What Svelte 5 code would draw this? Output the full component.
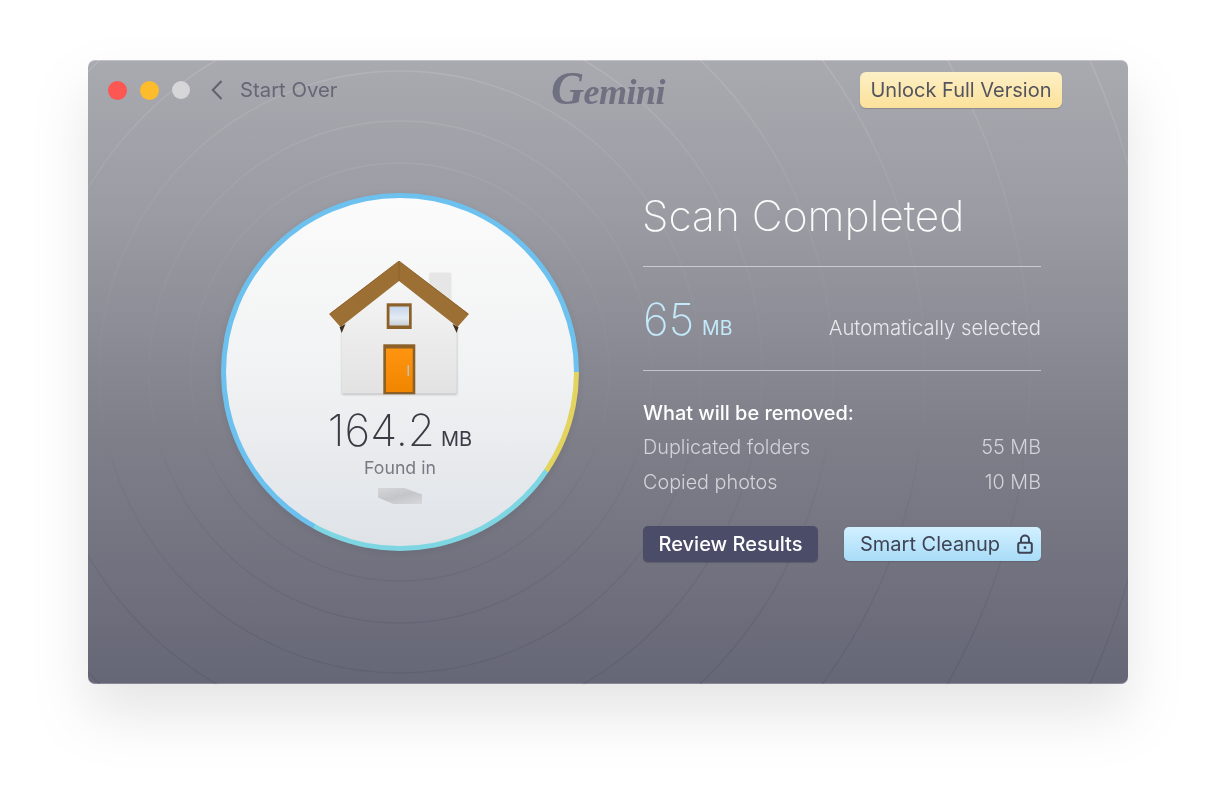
<script>
  const radii = [209, 251, 301, 362, 433, 525, 630, 757];
</script>

<div class="page">
  <div class="window">
    <svg class="rings" width="1040" height="624" viewBox="0 0 1040 624" aria-hidden="true">
      <defs>
        <linearGradient id="ringStroke" gradientUnits="userSpaceOnUse" x1="0" y1="0" x2="0" y2="624">
          <stop offset="0" stop-color="#fff" stop-opacity="0.12" />
          <stop offset="0.25" stop-color="#fff" stop-opacity="0.04" />
          <stop offset="0.5" stop-color="#fff" stop-opacity="0.012" />
          <stop offset="0.65" stop-color="#4a4b5c" stop-opacity="0.07" />
          <stop offset="1" stop-color="#4a4b5c" stop-opacity="0.26" />
        </linearGradient>
      </defs>
      {#each radii as r}
        <circle cx="312" cy="312" {r} fill="none" stroke="url(#ringStroke)" stroke-width="1.5" />
      {/each}
    </svg>

    <header class="titlebar">
      <div class="left">
        <span class="light red"></span>
        <span class="light yellow"></span>
        <span class="light grey"></span>
        <svg class="chevron" width="12" height="20" viewBox="0 0 12 20" aria-hidden="true">
          <path d="M10.5 1 L1.8 10 L10.5 19" fill="none" stroke="#62636f" stroke-width="2.1" />
        </svg>
        <span class="start">Start Over</span>
      </div>
      <div class="logo"><span class="cap">G</span>emini</div>
      <div class="right"><button class="unlock">Unlock Full Version</button></div>
    </header>

    <main class="content">
      <div class="gauge">
        <div class="disc">
          <svg class="house" width="142" height="136" viewBox="0 0 142 136" aria-hidden="true">
            <defs>
              <linearGradient id="wall" x1="0" y1="0" x2="0" y2="1">
                <stop offset="0" stop-color="#f6f6f6" />
                <stop offset="1" stop-color="#e2e2e2" />
              </linearGradient>
              <linearGradient id="pane" x1="0" y1="0" x2="0" y2="1">
                <stop offset="0" stop-color="#c6d5ea" />
                <stop offset="0.6" stop-color="#e4ebf3" />
                <stop offset="1" stop-color="#c9ced6" />
              </linearGradient>
              <linearGradient id="door" x1="0" y1="0" x2="0" y2="1">
                <stop offset="0" stop-color="#ff9410" />
                <stop offset="1" stop-color="#f08500" />
              </linearGradient>
              <filter id="soft" x="-10%" y="-10%" width="120%" height="120%">
                <feGaussianBlur stdDeviation="0.9" />
              </filter>
            </defs>
            <rect x="13" y="70" width="115" height="63.500" fill="#8e8e8e" opacity="0.6" filter="url(#soft)" />
            <rect x="100" y="11.500" width="22.500" height="45" rx="2" fill="#e6e6e6" />
            <path d="M12.700 65 L70 20 L127.700 65 V132.500 H12.700 Z" fill="url(#wall)" />
            <path d="M10.500 66 L12.700 72 L16.500 63 Z M129.500 66 L127.700 72 L123.500 63 Z" fill="#3e3020" />
            <path d="M70 0 L140 53 L128.500 66 L70 20 L11.500 66 L0 53 Z" fill="#9c6f35" />
            <path d="M70 0 V20 M70 0 L1 53 M70 0 L139 53" fill="none" stroke="#8c6029" stroke-width="0.8" />
            <rect x="57.700" y="42.300" width="25" height="25.700" fill="#8c6029" />
            <rect x="60.500" y="45.500" width="19.500" height="19" fill="url(#pane)" />
            <rect x="54.300" y="83.300" width="32" height="50" fill="#8c6029" />
            <rect x="57" y="87.500" width="26.700" height="43.500" fill="url(#door)" />
            <rect x="78.500" y="104" width="1.500" height="11" fill="#c2c2bc" />
          </svg>
          <div class="size"><span class="num">164.2</span><span class="unit">MB</span></div>
          <div class="found">Found in</div>
          <div class="redacted"></div>
        </div>
      </div>

      <section class="panel">
        <h1>Scan Completed</h1>
        <div class="selected">
          <div class="amount"><span class="big">65</span><span class="mb">MB</span></div>
          <span class="auto">Automatically selected</span>
        </div>
        <div class="removed">
          <div class="what">What will be removed:</div>
          <div class="row"><span>Duplicated folders</span><span>55 MB</span></div>
          <div class="row"><span>Copied photos</span><span>10 MB</span></div>
        </div>
        <div class="actions">
          <button class="review">Review Results</button>
          <button class="smart">
            <span>Smart Cleanup</span>
            <svg width="16" height="20" viewBox="0 0 16 20" aria-hidden="true">
              <path d="M4 9 V5.500 a4 4 0 0 1 8 0 V9" fill="none" stroke="#3f4454" stroke-width="2" />
              <rect x="1.200" y="8.700" width="13.600" height="10" rx="1.800" fill="none" stroke="#3f4454" stroke-width="2" />
              <circle cx="8" cy="13.700" r="1.400" fill="#3f4454" />
            </svg>
          </button>
        </div>
      </section>
    </main>
  </div>
</div>

<style>
  :global(body) {
    margin: 0;
    background: #fff;
  }
  .page {
    width: 1216px;
    height: 800px;
    padding: 60px 0 0 88px;
    box-sizing: border-box;
    font-family: Inter, "Liberation Sans", sans-serif;
    overflow: hidden;
  }
  .window {
    position: relative;
    width: 1040px;
    height: 624px;
    border-radius: 7px;
    overflow: hidden;
    background: linear-gradient(180deg, #a9a9b0 0%, #9b9ba3 25%, #7f7f8a 60%, #666776 100%);
    box-shadow: inset 0 1px 0 rgba(255, 255, 255, 0.28), inset 0 -1px 0 rgba(255, 255, 255, 0.22);
    filter: drop-shadow(0 30px 28px rgba(0, 0, 0, 0.1));
  }
  .rings {
    position: absolute;
    inset: 0;
  }
  .titlebar {
    position: relative;
    height: 60px;
    display: grid;
    grid-template-columns: 1fr auto 1fr;
    align-items: center;
  }
  .left {
    display: flex;
    align-items: center;
    padding: 0 0 0 20px;
  }
  .light {
    width: 19px;
    height: 19px;
    border-radius: 50%;
    margin-right: 13px;
  }
  .red { background: #fc5753; }
  .yellow { background: #fdbc2c; }
  .grey {
    background: #d6d6d8;
    width: 18px;
    height: 18px;
  }
  .chevron { margin-left: 8px; }
  .start {
    margin-left: 17px;
    margin-top: -2px;
    font-size: 20.300px;
    color: #666775;
  }
  .logo {
    font-family: "Liberation Serif", serif;
    font-style: italic;
    font-weight: 700;
    font-size: 36px;
    letter-spacing: -0.5px;
    color: #6f7080;
    margin-top: -4px;
  }
  .cap { font-size: 46px; }
  .right {
    display: flex;
    justify-content: flex-end;
    padding-right: 66px;
  }
  button {
    font-family: inherit;
    border: 0;
    padding: 0;
    cursor: pointer;
  }
  .unlock {
    width: 202px;
    height: 36px;
    border-radius: 6px;
    background: linear-gradient(180deg, #fdf0c6, #fbe19a);
    box-shadow: 0 1px 1px rgba(60, 60, 70, 0.25);
    color: #54545e;
    font-size: 20px;
    margin-top: -1px;
  }
  .content {
    position: relative;
    display: flex;
    padding: 73px 0 0 133px;
  }
  .gauge {
    width: 358px;
    height: 358px;
    border-radius: 50%;
    padding: 5px;
    box-sizing: border-box;
    background: conic-gradient(#6cc1ef 0deg 90deg, #e3d35f 90deg 124deg, #7ed6e2 124deg 209deg, #6cc1ef 209deg 360deg);
    box-shadow: 0 2px 6px rgba(50, 50, 60, 0.12);
  }
  .disc {
    width: 348px;
    height: 348px;
    border-radius: 50%;
    background: linear-gradient(180deg, #fbfbfb 0%, #f1f2f3 50%, #dfe3e8 100%);
    display: flex;
    flex-direction: column;
    align-items: center;
    padding-top: 63px;
    box-sizing: border-box;
  }
  .house { flex: none; }
  .size {
    display: flex;
    align-items: baseline;
    margin-top: 7px;
    color: #3a3b44;
    height: 52px;
  }
  .num {
    font-size: 44px;
    font-weight: 200;
    line-height: 52px;
  }
  .unit {
    font-size: 20px;
    margin-left: 6px;
    font-weight: 400;
  }
  .found {
    margin-top: 2px;
    font-size: 17.700px;
    line-height: 20px;
    color: #787983;
  }
  .redacted {
    width: 44px;
    height: 16px;
    margin-top: 10px;
    background: linear-gradient(165deg, #d4d6d8, #c3c5c9 50%, #d6d8db);
    clip-path: polygon(0 0, 60% 0, 100% 40%, 100% 100%, 35% 100%, 0 60%);
    filter: blur(0.6px);
  }
  .panel {
    width: 398px;
    margin-left: 64px;
    color: #fff;
  }
  h1 {
    margin: 0;
    font-size: 42.500px;
    font-weight: 200;
    line-height: 46px;
    height: 74px;
    color: #fbfbfc;
    box-sizing: border-box;
    border-bottom: 1px solid rgba(255, 255, 255, 0.5);
    white-space: nowrap;
    text-indent: -1px;
  }
  .selected {
    height: 104px;
    display: flex;
    justify-content: space-between;
    align-items: center;
    box-sizing: border-box;
    border-bottom: 1px solid rgba(255, 255, 255, 0.5);
  }
  .amount {
    display: flex;
    align-items: baseline;
    color: #c3e9fb;
  }
  .big {
    font-size: 44px;
    font-weight: 200;
    line-height: 52px;
  }
  .mb {
    font-size: 19.500px;
    margin-left: 8px;
  }
  .auto {
    font-size: 20.300px;
    font-weight: 300;
    color: #e8e8ec;
    margin-top: 18px;
  }
  .removed {
    padding-top: 30px;
  }
  .what {
    font-size: 19.900px;
    line-height: 24px;
    font-weight: 500;
    color: #fff;
    margin-bottom: 4px;
  }
  .row {
    display: flex;
    justify-content: space-between;
    height: 35px;
    align-items: center;
    font-size: 19.800px;
    font-weight: 300;
    color: #d3d3d9;
  }
  .actions {
    display: flex;
    align-items: center;
    justify-content: space-between;
    margin-top: 27px;
  }
  .review {
    width: 175px;
    height: 36px;
    border-radius: 5px;
    background: #4b4d68;
    color: #fff;
    font-size: 20px;
    font-weight: 500;
    box-shadow: 0 1px 1px rgba(50, 50, 60, 0.3);
  }
  .smart {
    width: 197px;
    height: 34px;
    border-radius: 5px;
    background: linear-gradient(180deg, #d2f0ff, #a8dcf8);
    color: #3f4454;
    font-size: 20px;
    display: flex;
    align-items: center;
    justify-content: space-between;
    padding: 0 8px 0 16px;
    box-sizing: border-box;
    box-shadow: 0 1px 1px rgba(50, 50, 60, 0.25);
  }
</style>
